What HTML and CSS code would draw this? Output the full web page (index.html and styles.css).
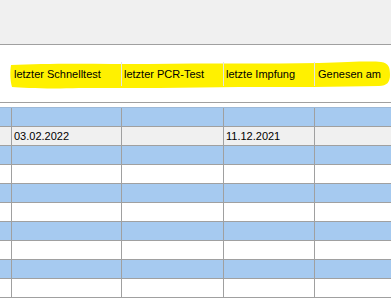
FILE: index.html
```html
<!DOCTYPE html>
<html lang="de">
<head>
<meta charset="utf-8">
<title>Tests</title>
<link rel="stylesheet" href="styles.css">
</head>
<body>
<div class="toolbar"></div>
<div class="header">
  <div class="cell c0"></div>
  <div class="cell c1">letzter Schnelltest</div>
  <div class="cell c2">letzter PCR-Test</div>
  <div class="cell c3">letzte Impfung</div>
  <div class="cell c4">Genesen am</div>
  <svg class="marker" width="382" height="32" viewBox="0 0 382 32" aria-hidden="true">
    <path d="M2 5 C40 3 90 4 140 4 C200 3 260 4 310 3 C340 2 362 1 372 2 C380 3 381 8 381 15 C381 22 378 26 370 26 C330 27 280 27 230 27 C180 28 120 28 70 28 C40 29 15 28 3 27 C1 20 1 11 2 5 Z" fill="#fff100"/>
  </svg>
</div>
<div class="grid">
  <div class="row blue"><div class="cell c0"></div><div class="cell c1"></div><div class="cell c2"></div><div class="cell c3"></div><div class="cell c4"></div></div>
  <div class="row gray"><div class="cell c0"></div><div class="cell c1">03.02.2022</div><div class="cell c2"></div><div class="cell c3">11.12.2021</div><div class="cell c4"></div></div>
  <div class="row blue"><div class="cell c0"></div><div class="cell c1"></div><div class="cell c2"></div><div class="cell c3"></div><div class="cell c4"></div></div>
  <div class="row white"><div class="cell c0"></div><div class="cell c1"></div><div class="cell c2"></div><div class="cell c3"></div><div class="cell c4"></div></div>
  <div class="row blue"><div class="cell c0"></div><div class="cell c1"></div><div class="cell c2"></div><div class="cell c3"></div><div class="cell c4"></div></div>
  <div class="row white"><div class="cell c0"></div><div class="cell c1"></div><div class="cell c2"></div><div class="cell c3"></div><div class="cell c4"></div></div>
  <div class="row blue"><div class="cell c0"></div><div class="cell c1"></div><div class="cell c2"></div><div class="cell c3"></div><div class="cell c4"></div></div>
  <div class="row white"><div class="cell c0"></div><div class="cell c1"></div><div class="cell c2"></div><div class="cell c3"></div><div class="cell c4"></div></div>
  <div class="row blue"><div class="cell c0"></div><div class="cell c1"></div><div class="cell c2"></div><div class="cell c3"></div><div class="cell c4"></div></div>
  <div class="row white"><div class="cell c0"></div><div class="cell c1"></div><div class="cell c2"></div><div class="cell c3"></div><div class="cell c4"></div></div>
</div>
</body>
</html>
```
FILE: styles.css
```css
* { box-sizing: border-box; }
html, body { margin: 0; padding: 0; background: #fff; overflow: hidden; }
body {
  font-family: "Liberation Sans", Arial, sans-serif;
  font-size: 11px;
  color: #000;
  width: 391px;
  height: 299px;
}
.toolbar {
  height: 45px;
  background: #f0f0f0;
  border-bottom: 1px solid #a0a0a0;
}
.header {
  position: relative;
  height: 58px;
  display: grid;
  grid-template-columns: 12px 110px 102px 91px 1fr;
  align-items: center;
  border-bottom: 1px solid #a0a0a0;
}
.header .cell {
  position: relative;
  z-index: 1;
  padding-left: 2px;
  white-space: nowrap;
  line-height: 24px;
}
.header .c1, .header .c2, .header .c3 { border-right: 1px solid #e4e4e4; }
.header .c4 { padding-left: 3px; }
.marker {
  position: absolute;
  left: 9px;
  top: 15px;
  z-index: 0;
}
.grid {
  margin-top: 4px;
  border-top: 1px solid #9db9d8;
}
.row {
  display: grid;
  grid-template-columns: 12px 110px 102px 91px 1fr;
  height: 19px;
  border-bottom: 1px solid #a0a0a0;
}
.row .cell {
  border-right: 1px solid #a0a0a0;
  padding-left: 2px;
  line-height: 18px;
  white-space: nowrap;
}
.row .c4 { border-right: none; }
.blue { background: #a6caf0; }
.gray { background: #f0f0f0; }
.white { background: #fff; }
```
